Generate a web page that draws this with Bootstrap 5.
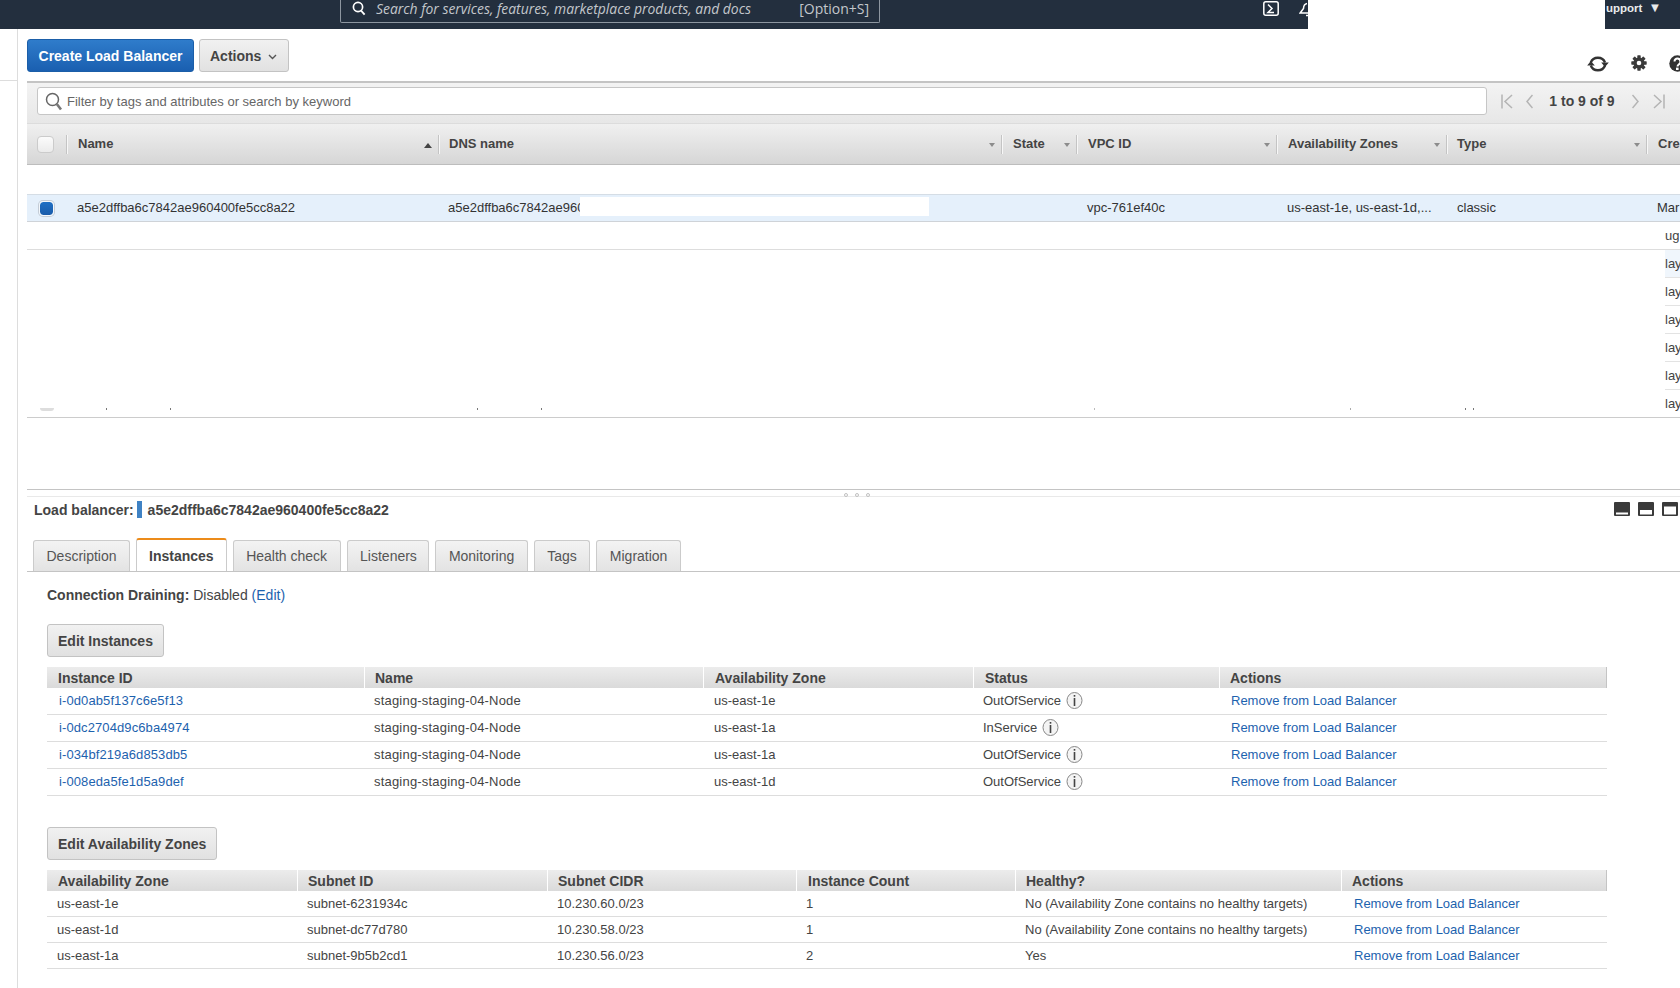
<!DOCTYPE html>
<html lang="en">
<head>
<meta charset="utf-8">
<title>Load Balancers</title>
<link href="https://cdn.jsdelivr.net/npm/bootstrap@5.3.0/dist/css/bootstrap.min.css" rel="stylesheet">
<style>
html,body{height:988px;overflow:hidden;background:#fff}
body{font-family:"Liberation Sans",Arial,sans-serif;font-size:13px;color:#444}
a{color:#1d62ae;text-decoration:none}
.topbar{height:29px;background:#232f3e;color:#fff}
.topsearch{margin-left:340px;width:540px;height:23px;border:1px solid #8d96a0;border-top:0;border-radius:0 0 2px 2px;color:#c3c7cc;font-family:"Open Sans",sans-serif;font-size:14px;line-height:18px;padding:0 10px 0 11px}
.topsearch i{font-size:13.9px;margin-left:10px}
.topsearch svg{flex:none;margin-top:1px}
.termicon{margin-left:383px;margin-top:1px}
.bellcut{margin-left:20px;margin-top:2px}
.redact{width:297px;height:29px;background:#fff}
.supportx{font-size:11.5px;font-weight:700;line-height:15px;color:#e8eaec;white-space:nowrap;padding-left:1px}
.supportx span{font-size:13px;margin-left:6px}
.sidebarx{width:18px;flex:none;border-right:1px solid #ddd;height:959px}
.sidebarx div{height:52px;border-bottom:1px solid #ddd}
.mainx{margin-left:9px;flex:1;min-width:0;overflow:hidden}
.actionbar{height:52px;padding-top:10px}
.btngroupx{gap:5px}
.btn-aws{height:33px;font-size:14px;font-weight:700;padding:1px 10px 0;border-radius:3px;line-height:20px}
.btn-blue{background:linear-gradient(#2f7ccb,#1a5fb0);border:1px solid #1b5ea8;color:#fff;width:167px;padding:1px 0 0}
.btn-blue:hover{background:#1a5fb0;color:#fff}
.btn-gray{background:linear-gradient(#f1f1f1,#e1e1e1);border:1px solid #c3c3c3;color:#444}
.btn-gray:hover{background:#e1e1e1;color:#444}
.chev{margin-left:7px;margin-right:1px;vertical-align:1px}
.rightico{padding-top:16px;gap:22px}
.filterbar{height:42px;border-top:2px solid #c4c4c4;background:linear-gradient(#f3f3f3,#e7e7e7);padding:4px 0 0 10px}
.filterbox{width:1450px;height:28px;padding:0 0 0 7px;font-size:13px;line-height:26px;color:#666;border:1px solid #c6c6c6;border-radius:3px;gap:4px;background:#fff}
.filterbox span{padding-top:1px}
.pagerx{color:#444;height:28px;margin-right:15px}
.pagerx b{font-size:14px;margin:0 17px 0 16px;width:66px;text-align:center;white-space:nowrap}
.pgap1{margin-left:13px}
.pgap2{margin-left:14px}
.gridwrap{overflow:hidden;position:relative;height:295px}
.table.gridx{table-layout:fixed;width:1690px;margin:0;border-collapse:separate;border-spacing:0;color:#222;font-size:13px}
.table.gridx>*>*>*{padding:0;border:0;background:transparent;box-shadow:none}
.table.gridx thead th{height:42px;background:linear-gradient(#f0f0f0,#d6d6d6);border-top:1px solid #dcdcdc;border-bottom:1px solid #bdbdbd;font-size:13px;font-weight:700;color:#444;padding:0 0 0 12px;position:relative;vertical-align:middle}
.table.gridx thead th:nth-child(3),.table.gridx thead th:nth-child(7){padding-left:11px}
.table.gridx thead th+th::before{content:"";position:absolute;left:0;top:11px;height:19px;border-left:1px solid #c4c4c4;box-shadow:1px 0 0 #f7f7f7}
.table.gridx tbody td{height:28px;padding-left:11px;vertical-align:middle;white-space:nowrap;overflow:hidden;color:#333}
.table.gridx tbody td.spacerx{height:29px}
.table.gridx tbody tr.rowsel td:nth-child(3){padding-left:10px}
.c1{width:39px}.c2{width:372px}.c3{width:563px}.c4{width:75px}.c5{width:200px}.c6{width:170px}.c7{width:200px}.c8{width:71px}
.caretx{position:absolute;right:6px;top:19px;width:0;height:0;border-left:3px solid transparent;border-right:3px solid transparent;border-top:4px solid #8c8c8c}
.caretup{border-left-width:4px;border-right-width:4px;border-top:0;border-bottom:5px solid #444}
.table.gridx .rowsel td{background:#e5f0fb;border-top:1px solid #d5dde5;border-bottom:1px solid #cfd3d8}
.chk{display:block;width:17px;height:17px;margin-left:10px;border:1px solid #cbcbcb;border-radius:4px;background:linear-gradient(#fbfbfb,#ebebeb)}
.chkon{width:15px;height:15px;margin-left:12px;background:linear-gradient(#1f6fc4,#1a5caa);background-clip:padding-box;border:1px solid #f3f7fb;box-shadow:0 0 0 1px #c4ccd6}
.table.gridx .rowline td{border-bottom:1px solid #ddd}
.table.gridx .rowlast td{border-bottom:1px solid #ccc}
.table.gridx tbody td.clipd{padding:0;color:#444}
.clipin{margin-left:19px;height:27px;line-height:27px}
.clipline{border-bottom:1px solid #e3e3e3;height:28px}
.clipblue{background:#f0f6fc}
.redactrow{position:absolute;left:553px;top:74px;width:349px;height:19px;background:#fff}
.speck{position:absolute;bottom:8px;width:1px;height:2px;background:#777}
.halfchk{position:absolute;left:13px;bottom:7px;width:14px;height:3px;background:#ddd;border-radius:0 0 3px 3px}
.s1{left:79px}.s2{left:143px}.s3{left:450px}.s4{left:514px}.s5{left:1067px;background:#bbb}.s6{left:1323px;background:#aaa}.s7{left:1438px}.s8{left:1446px}
.splitx{margin-top:71px;height:8px;border-top:1px solid #c4c4c4;border-bottom:1px solid #e9e9e9;position:relative}
.dotsx{position:absolute;left:817px;top:3px;width:26px;display:flex;justify-content:space-between}
.dotsx span{width:4px;height:4px;border:1px solid #c0c0c0;border-radius:50%}
.lbtitle{height:41px;padding:4px 0 0 7px;font-size:14px;font-weight:700;color:#444;line-height:18px}
.lbtitle em{display:inline-block;width:5px;height:17px;background:#3f82c4;margin:0 6px 0 3px;vertical-align:-3px}
.paneicons{gap:8px;padding-right:2px;padding-top:1px}
.tabsx{padding-left:6px;gap:6px;border-bottom:1px solid #c4c4c4;height:34px;align-items:flex-end;--bs-nav-tabs-border-width:0}
.tabsx .nav-link{height:31px;padding:0 12.5px;line-height:30px;font-size:14px;color:#555;background:linear-gradient(#f3f3f3,#e3e3e3);border:1px solid #cbcbcb;border-bottom:0;border-radius:3px 3px 0 0}
.tabsx .nav-item:nth-child(4) .nav-link{padding-right:11.5px}
.tabsx .nav-link.active{height:33px;line-height:33px;background:#fff;color:#444;font-weight:700;border-color:#cbcbcb;border-top:2px solid #ec8b1a;padding:0 12px}
.panebody{padding:0 0 0 20px}
.drainx{height:52px;padding-top:13px;font-size:14px;line-height:20px;color:#444}
.table.inlinetab{table-layout:fixed;width:1560px;margin:0;border-collapse:separate;border-spacing:0;font-size:13px;color:#444}
.table.inlinetab>*>*>*{padding:0;background:transparent;box-shadow:none;border:0}
.table.inlinetab thead th{height:21px;background:linear-gradient(#ececec,#dadada);font-size:14px;font-weight:700;color:#444;padding-left:10px;line-height:18px;border-left:1px solid #fff;vertical-align:middle}
.table.inlinetab thead th:first-child{border-left:0;padding-left:11px}
.table.inlinetab thead th:last-child{border-right:1px solid #c4c4c4}
.table.inlinetab tbody td{padding-left:10px;border-bottom:1px solid #ddd;vertical-align:middle;color:#444;white-space:nowrap;line-height:20px}
.table.tb1 tbody td{height:27px}
.table.tb2 tbody td{height:26px}
.table.tb1 tbody td:first-child{padding-left:12px;letter-spacing:.1px}
.table.tb1 tbody td:nth-child(2){letter-spacing:.2px}
.table.tb1 tbody td:nth-child(3){padding-left:11px}
.table.tb1 tbody td:nth-child(5){padding-left:12px}
.table.tb2 tbody td:nth-child(6){padding-left:13px}
.table.tb1 thead th:nth-child(3),.table.tb1 thead th:nth-child(4){padding-left:11px}
.table.tb2 thead th:nth-child(4){padding-left:11px}
.a1{width:317px}.a2{width:339px}.a3{width:270px}.a4{width:246px}.a5{width:388px}
.b1{width:250px}.b2{width:250px}.b3{width:249px}.b4{width:219px}.b5{width:326px}.b6{width:266px}
.btn-edit{margin-bottom:10px}
.gapx{margin-top:31px}
.infoi{vertical-align:-5px;margin-left:1px}
</style>
</head>
<body>
<nav class="topbar d-flex align-items-start">
  <div class="topsearch d-flex align-items-start">
    <svg width="14" height="15" viewBox="0 0 14 15"><circle cx="6" cy="6" r="4.6" fill="none" stroke="#fff" stroke-width="1.7"/><path d="M9 9.500l3.600 4.200" stroke="#fff" stroke-width="1.900"/></svg>
    <i>Search for services, features, marketplace products, and docs</i>
    <span class="ms-auto">[Option+S]</span>
  </div>
  <svg class="termicon" width="16" height="15" viewBox="0 0 16 15"><rect x=".8" y=".8" width="14.400" height="13.400" rx="2" fill="none" stroke="#fff" stroke-width="1.500"/><path d="M5 3.500l4 4-4 4h6" fill="none" stroke="#fff" stroke-width="1.500"/></svg>
  <svg class="bellcut" width="9" height="15" viewBox="0 0 9 15"><path d="M8 1.500C5.500 2 4.600 4 4.500 6.500L1.200 11H9M7 13.500h2" fill="none" stroke="#fff" stroke-width="1.500"/></svg>
  <div class="redact"></div>
  <div class="supportx">upport<span>▼</span></div>
</nav>

<div class="d-flex">
  <aside class="sidebarx"><div></div></aside>
  <main class="mainx">
    <div class="actionbar d-flex justify-content-between">
      <div class="d-flex btngroupx">
        <button type="button" class="btn btn-aws btn-blue">Create Load Balancer</button>
        <button type="button" class="btn btn-aws btn-gray">Actions<svg class="chev" width="9" height="6" viewBox="0 0 9 6"><path d="M1 1l3.500 3.500L8 1" fill="none" stroke="#555" stroke-width="1.400"/></svg></button>
      </div>
      <div class="rightico d-flex align-items-start">
        <svg width="22" height="18" viewBox="0 0 22 18"><path d="M3.800 7.500A7.500 7 0 0 1 18 7.500" fill="none" stroke="#333" stroke-width="2.300"/><path d="M18 10.500A7.500 7 0 0 1 3.800 10.500" fill="none" stroke="#333" stroke-width="2.300"/><path d="M14.200 7.500h7.600l-3.800 4.500zM.2 10.500h7.600L3.800 6z" fill="#333"/></svg>
        <svg width="16" height="16" viewBox="0 0 16 16"><g fill="#3a3a3a"><circle cx="8" cy="8" r="5.500"/><rect x="6.300" y=".3" width="3.400" height="15.400" rx=".6"/><rect x="6.300" y=".3" width="3.400" height="15.400" rx=".6" transform="rotate(45 8 8)"/><rect x="6.300" y=".3" width="3.400" height="15.400" rx=".6" transform="rotate(90 8 8)"/><rect x="6.300" y=".3" width="3.400" height="15.400" rx=".6" transform="rotate(135 8 8)"/></g><circle cx="8" cy="8" r="2.300" fill="#fff"/></svg>
        <svg width="11" height="17" viewBox="0 0 11 17"><circle cx="8.500" cy="8.500" r="8.200" fill="#333"/><path d="M5.500 6.500c0-4 6-4 6 .5 0 2-3 2.500-3 4.500" fill="none" stroke="#fff" stroke-width="2"/><rect x="7" y="12.600" width="2.600" height="2.400" fill="#fff"/></svg>
      </div>
    </div>

    <div class="filterbar d-flex align-items-start">
      <div class="filterbox form-control d-flex align-items-center">
        <svg width="18" height="19" viewBox="0 0 18 19"><circle cx="7.500" cy="7.500" r="6" fill="none" stroke="#666" stroke-width="1.500"/><path d="M11.800 12l4.200 5.500" stroke="#777" stroke-width="2.600"/></svg>
        <span>Filter by tags and attributes or search by keyword</span>
      </div>
      <div class="pagerx d-flex align-items-center ms-auto">
        <svg width="12" height="15" viewBox="0 0 12 15"><path d="M1 .5v14M11 1L4 7.500l7 6.500" fill="none" stroke="#b4b4b4" stroke-width="1.500"/></svg>
        <svg class="pgap1" width="7" height="15" viewBox="0 0 7 15"><path d="M6.500 1L1 7.500 6.500 14" fill="none" stroke="#b4b4b4" stroke-width="1.500"/></svg>
        <b>1 to 9 of 9</b>
        <svg width="7" height="15" viewBox="0 0 7 15"><path d="M.5 1L6 7.500.5 14" fill="none" stroke="#b4b4b4" stroke-width="1.500"/></svg>
        <svg class="pgap2" width="12" height="15" viewBox="0 0 12 15"><path d="M11 .5v14M1 1l7 6.500L1 14" fill="none" stroke="#b4b4b4" stroke-width="1.500"/></svg>
      </div>
    </div>

    <div class="gridwrap">
      <table class="table gridx">
        <colgroup><col class="c1"><col class="c2"><col class="c3"><col class="c4"><col class="c5"><col class="c6"><col class="c7"><col class="c8"></colgroup>
        <thead>
          <tr>
            <th class="ps-0"><span class="chk"></span></th>
            <th>Name<span class="caretx caretup"></span></th>
            <th>DNS name<span class="caretx"></span></th>
            <th>State<span class="caretx"></span></th>
            <th>VPC ID<span class="caretx"></span></th>
            <th>Availability Zones<span class="caretx"></span></th>
            <th>Type<span class="caretx"></span></th>
            <th>Cre</th>
          </tr>
        </thead>
        <tbody>
          <tr><td class="spacerx" colspan="8"></td></tr>
          <tr class="rowsel"><td class="ps-0"><span class="chk chkon"></span></td><td>a5e2dffba6c7842ae960400fe5cc8a22</td><td>a5e2dffba6c7842ae960400fe5cc8a22-1</td><td></td><td>vpc-761ef40c</td><td>us-east-1e, us-east-1d,...</td><td>classic</td><td>Mar</td></tr>
          <tr class="rowline"><td colspan="7"></td><td class="clipd"><div class="clipin">ug</div></td></tr>
          <tr><td colspan="7"></td><td class="clipd"><div class="clipin clipline clipblue">lay</div></td></tr>
          <tr><td colspan="7"></td><td class="clipd"><div class="clipin clipline">lay</div></td></tr>
          <tr><td colspan="7"></td><td class="clipd"><div class="clipin clipline">lay</div></td></tr>
          <tr><td colspan="7"></td><td class="clipd"><div class="clipin clipline">lay</div></td></tr>
          <tr><td colspan="7"></td><td class="clipd"><div class="clipin clipline">lay</div></td></tr>
          <tr class="rowlast"><td colspan="7"></td><td class="clipd"><div class="clipin">lay</div></td></tr>
        </tbody>
      </table>
      <div class="redactrow"></div>
      <span class="halfchk"></span>
      <span class="speck s1"></span><span class="speck s2"></span><span class="speck s3"></span><span class="speck s4"></span><span class="speck s5"></span><span class="speck s6"></span><span class="speck s7"></span><span class="speck s8"></span>
    </div>

    <div class="splitx"><div class="dotsx"><span></span><span></span><span></span></div></div>

    <div class="lbtitle d-flex justify-content-between">
      <div>Load balancer:<em></em>a5e2dffba6c7842ae960400fe5cc8a22</div>
      <div class="paneicons d-flex align-items-start">
        <svg width="16" height="14" viewBox="0 0 16 14"><rect width="16" height="14" rx="1" fill="#3a3a3a"/><rect x="2" y="10.500" width="12" height="2" fill="#fff"/></svg>
        <svg width="16" height="14" viewBox="0 0 16 14"><rect width="16" height="14" rx="1" fill="#3a3a3a"/><rect x="2" y="8" width="12" height="4.500" fill="#fff"/></svg>
        <svg width="16" height="14" viewBox="0 0 16 14"><rect width="16" height="14" rx="1" fill="#3a3a3a"/><rect x="2" y="4.500" width="12" height="8" fill="#fff"/></svg>
      </div>
    </div>

    <ul class="nav nav-tabs tabsx">
      <li class="nav-item"><a class="nav-link" href="#">Description</a></li>
      <li class="nav-item"><a class="nav-link active" href="#">Instances</a></li>
      <li class="nav-item"><a class="nav-link" href="#">Health check</a></li>
      <li class="nav-item"><a class="nav-link" href="#">Listeners</a></li>
      <li class="nav-item"><a class="nav-link" href="#">Monitoring</a></li>
      <li class="nav-item"><a class="nav-link" href="#">Tags</a></li>
      <li class="nav-item"><a class="nav-link" href="#">Migration</a></li>
    </ul>

    <div class="panebody">
      <div class="drainx"><b>Connection Draining:</b> Disabled <a href="#">(Edit)</a></div>
      <button type="button" class="btn btn-aws btn-gray btn-edit d-block">Edit Instances</button>
      <table class="table inlinetab tb1">
        <colgroup><col class="a1"><col class="a2"><col class="a3"><col class="a4"><col class="a5"></colgroup>
        <thead><tr><th>Instance ID</th><th>Name</th><th>Availability Zone</th><th>Status</th><th>Actions</th></tr></thead>
        <tbody>
          <tr><td><a href="#">i-0d0ab5f137c6e5f13</a></td><td>staging-staging-04-Node</td><td>us-east-1e</td><td>OutOfService <svg class="infoi" width="17" height="19" viewBox="0 0 17 19"><ellipse cx="8.500" cy="9.500" rx="7.500" ry="8" fill="#f4f4f4" stroke="#888"/><rect x="7.700" y="4" width="1.600" height="1.700" fill="#444"/><rect x="7.700" y="7" width="1.600" height="8" fill="#444"/></svg></td><td><a href="#">Remove from Load Balancer</a></td></tr>
          <tr><td><a href="#">i-0dc2704d9c6ba4974</a></td><td>staging-staging-04-Node</td><td>us-east-1a</td><td>InService <svg class="infoi" width="17" height="19" viewBox="0 0 17 19"><ellipse cx="8.500" cy="9.500" rx="7.500" ry="8" fill="#f4f4f4" stroke="#888"/><rect x="7.700" y="4" width="1.600" height="1.700" fill="#444"/><rect x="7.700" y="7" width="1.600" height="8" fill="#444"/></svg></td><td><a href="#">Remove from Load Balancer</a></td></tr>
          <tr><td><a href="#">i-034bf219a6d853db5</a></td><td>staging-staging-04-Node</td><td>us-east-1a</td><td>OutOfService <svg class="infoi" width="17" height="19" viewBox="0 0 17 19"><ellipse cx="8.500" cy="9.500" rx="7.500" ry="8" fill="#f4f4f4" stroke="#888"/><rect x="7.700" y="4" width="1.600" height="1.700" fill="#444"/><rect x="7.700" y="7" width="1.600" height="8" fill="#444"/></svg></td><td><a href="#">Remove from Load Balancer</a></td></tr>
          <tr><td><a href="#">i-008eda5fe1d5a9def</a></td><td>staging-staging-04-Node</td><td>us-east-1d</td><td>OutOfService <svg class="infoi" width="17" height="19" viewBox="0 0 17 19"><ellipse cx="8.500" cy="9.500" rx="7.500" ry="8" fill="#f4f4f4" stroke="#888"/><rect x="7.700" y="4" width="1.600" height="1.700" fill="#444"/><rect x="7.700" y="7" width="1.600" height="8" fill="#444"/></svg></td><td><a href="#">Remove from Load Balancer</a></td></tr>
        </tbody>
      </table>

      <button type="button" class="btn btn-aws btn-gray btn-edit d-block gapx">Edit Availability Zones</button>
      <table class="table inlinetab tb2">
        <colgroup><col class="b1"><col class="b2"><col class="b3"><col class="b4"><col class="b5"><col class="b6"></colgroup>
        <thead><tr><th>Availability Zone</th><th>Subnet ID</th><th>Subnet CIDR</th><th>Instance Count</th><th>Healthy?</th><th>Actions</th></tr></thead>
        <tbody>
          <tr><td>us-east-1e</td><td>subnet-6231934c</td><td>10.230.60.0/23</td><td>1</td><td>No (Availability Zone contains no healthy targets)</td><td><a href="#">Remove from Load Balancer</a></td></tr>
          <tr><td>us-east-1d</td><td>subnet-dc77d780</td><td>10.230.58.0/23</td><td>1</td><td>No (Availability Zone contains no healthy targets)</td><td><a href="#">Remove from Load Balancer</a></td></tr>
          <tr><td>us-east-1a</td><td>subnet-9b5b2cd1</td><td>10.230.56.0/23</td><td>2</td><td>Yes</td><td><a href="#">Remove from Load Balancer</a></td></tr>
        </tbody>
      </table>
    </div>
  </main>
</div>
<script src="https://cdn.jsdelivr.net/npm/bootstrap@5.3.0/dist/js/bootstrap.bundle.min.js"></script>
</body>
</html>
